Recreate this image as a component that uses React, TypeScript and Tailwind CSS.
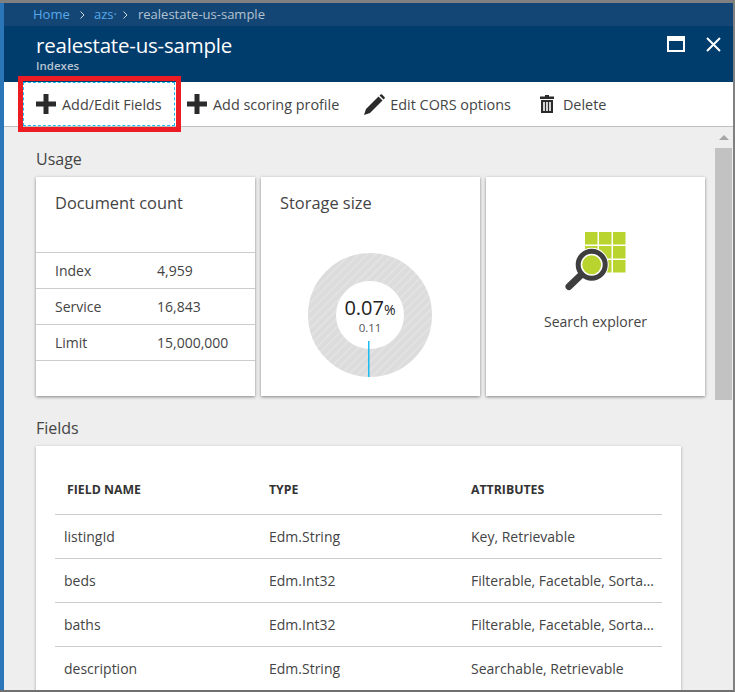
const font = { fontFamily: '"Open Sans", "Noto Sans", sans-serif' };

const tools = [
  { label: 'Add/Edit Fields', icon: 'plus', focused: true },
  { label: 'Add scoring profile', icon: 'plus' },
  { label: 'Edit CORS options', icon: 'pencil' },
  { label: 'Delete', icon: 'trash' },
];

const counts = [
  ['Index', '4,959'],
  ['Service', '16,843'],
  ['Limit', '15,000,000'],
];

const fields = [
  ['listingId', 'Edm.String', 'Key, Retrievable'],
  ['beds', 'Edm.Int32', 'Filterable, Facetable, Sortable'],
  ['baths', 'Edm.Int32', 'Filterable, Facetable, Sortable'],
  ['description', 'Edm.String', 'Searchable, Retrievable'],
];

function ToolIcon({ name }: { name: string }) {
  if (name === 'plus') {
    return (
      <svg width="20" height="20" viewBox="0 0 20 20" fill="#2b2b2b">
        <path d="M7.500 0h5v7.500h7.500v5h-7.500v7.500h-5v-7.500H0v-5h7.500z" />
      </svg>
    );
  }
  if (name === 'pencil') {
    return (
      <svg width="21" height="21" viewBox="0 0 21 21" fill="#2b2b2b">
        <path d="M0 21l2-6L14.500 2.500l4 4L6 19z" />
        <path d="M15.500 1.500l1-1q.8-.6 1.500 0l2.500 2.500q.6.700 0 1.500l-1 1z" />
      </svg>
    );
  }
  return (
    <svg width="14" height="18" viewBox="0 0 14 18" fill="#2b2b2b">
      <path d="M5 0h4v1.500h5V4H0V1.500h5z" />
      <path d="M1 5h12v13H1zM3.200 7v9h1.600V7zm3 0v9h1.600V7zm3 0v9h1.600V7z" fillRule="evenodd" />
    </svg>
  );
}

function Chevron() {
  return (
    <svg width="5" height="8" viewBox="0 0 5 8" fill="none" stroke="#d0d8e0" strokeWidth="1" className="shrink-0">
      <path d="M.5.500L4 4 .5 7.500" />
    </svg>
  );
}

function Donut() {
  return (
    <svg width="124" height="124" viewBox="0 0 124 124" className="block">
      <defs>
        <pattern id="hatch" width="6" height="6" patternUnits="userSpaceOnUse" patternTransform="rotate(45)">
          <rect width="6" height="6" fill="#dcdcdc" />
          <rect width="1.500" height="6" fill="#e4e4e4" />
        </pattern>
      </defs>
      <circle cx="62" cy="62" r="48" fill="none" stroke="url(#hatch)" strokeWidth="28" />
      <rect x="60" y="88" width="1.500" height="36" fill="#1bbcf2" />
    </svg>
  );
}

function ExplorerIcon() {
  return (
    <svg width="62" height="62" viewBox="0 0 62 62" className="block">
      <g fill="#bad42f">
        <rect x="20" y="0" width="12.500" height="12.500" />
        <rect x="34" y="0" width="12.500" height="12.500" />
        <rect x="48" y="0" width="12.500" height="12.500" />
        <rect x="20" y="14" width="12.500" height="12.500" />
        <rect x="34" y="14" width="12.500" height="12.500" />
        <rect x="48" y="14" width="12.500" height="12.500" />
        <rect x="20" y="28" width="12.500" height="12.500" />
        <rect x="34" y="28" width="12.500" height="12.500" />
        <rect x="48" y="28" width="12.500" height="12.500" />
      </g>
      <circle cx="26.700" cy="32.700" r="17" fill="#fff" />
      <path d="M15 44L4 54.500" stroke="#3e3e3e" strokeWidth="7" strokeLinecap="round" />
      <circle cx="26.700" cy="32.700" r="13.500" fill="#fff" stroke="#3e3e3e" strokeWidth="5" />
      <circle cx="26.700" cy="32.700" r="9.500" fill="#bad42f" />
    </svg>
  );
}

export default function App() {
  return (
    <div
      className="relative w-[735px] h-[692px] overflow-hidden flex flex-col bg-[#eeeeee] border-t-[3px] border-b-[2px] border-r-[2px] border-t-[#808080] border-b-[#707070] border-r-[#808080]"
      style={font}
    >
      <div className="flex-1 min-h-0 flex flex-col border-l-[4px] border-l-[#2a76b8]">
        {/* Breadcrumb */}
        <div className="h-[23px] shrink-0 bg-[#134674] flex items-center pl-[29px] text-[13px] text-[#b4c2d0]">
          <span className="w-[47px] text-[#59a9ea]">Home</span>
          <Chevron />
          <span className="w-[38px] pl-[9px] text-[#59a9ea]">azs·</span>
          <Chevron />
          <span className="pl-[10px]">realestate-us-sample</span>
        </div>

        {/* Title */}
        <div className="h-[56px] shrink-0 bg-[#003c6c] flex items-start justify-between pl-[32px] pr-[12px] text-white">
          <div>
            <div className="text-[20.500px] leading-[28px] mt-[5px] tracking-[-0.2px]">realestate-us-sample</div>
            <div className="text-[11.500px] leading-[13px] font-semibold text-[#b8c4d0]">Indexes</div>
          </div>
          <div className="flex items-center gap-[21px] mt-[10px]">
            <div className="w-[18px] h-[16px] border-[2px] border-t-[5px] border-white" />
            <svg width="15" height="15" viewBox="0 0 15 15" stroke="#fff" strokeWidth="2" fill="none">
              <path d="M1 1l13 13M14 1L1 14" />
            </svg>
          </div>
        </div>

        {/* Toolbar */}
        <div className="h-[45px] shrink-0 bg-white border-b border-b-[#c0c0c0] flex items-stretch pl-[19px] text-[14.400px] text-[#444444]">
          {tools.map((t) => (
            <div
              key={t.label}
              className={
                t.focused
                  ? 'w-[152px] flex items-center gap-[6px] pl-[12px] border border-dashed border-[#1bbcf2]'
                  : t.icon === 'trash'
                    ? 'flex items-center gap-[9px] ml-[29px]'
                    : t.icon === 'pencil'
                      ? 'flex items-center gap-[5px] ml-[25px]'
                      : 'flex items-center gap-[6px] ml-[12px]'
              }
            >
              <ToolIcon name={t.icon} />
              <span className="pt-[2px]">{t.label}</span>
            </div>
          ))}
        </div>

        {/* Content */}
        <div className="flex-1 min-h-0 flex overflow-hidden">
          <div className="w-[710px] shrink-0 pl-[32px]">
            <div className="text-[16px] leading-[22px] text-[#444444] mt-[21px]">Usage</div>
            <div className="flex gap-[6px] mt-[7px]">
              <div className="w-[219px] h-[219px] bg-white shadow-[0_1px_3px_rgba(0,0,0,0.45)]">
                <div className="text-[16.400px] leading-[22px] text-[#444444] pl-[19px] pt-[15px] h-[75px]">Document count</div>
                <div className="border-t border-t-[#cccccc]">
                  {counts.map(([label, value]) => (
                    <div key={label} className="h-[36px] flex items-center pl-[19px] border-b border-b-[#cccccc] text-[14px] text-[#444444]">
                      <span className="w-[102px]">{label}</span>
                      <span>{value}</span>
                    </div>
                  ))}
                </div>
              </div>

              <div className="w-[219px] h-[219px] bg-white shadow-[0_1px_3px_rgba(0,0,0,0.45)]">
                <div className="text-[16.400px] leading-[22px] text-[#444444] pl-[19px] pt-[15px]">Storage size</div>
                <div className="relative w-[124px] mt-[39px] ml-[47px]">
                  <Donut />
                  <div className="absolute left-0 right-0 top-[43px] text-center text-[#222222]">
                    <div className="text-[20px] leading-[23px]">
                      0.07<span className="text-[14px]">%</span>
                    </div>
                    <div className="text-[11.500px] leading-[13px] text-[#555555]">0.11</div>
                  </div>
                </div>
              </div>

              <div className="w-[219px] h-[219px] bg-white shadow-[0_1px_3px_rgba(0,0,0,0.45)] flex flex-col items-center">
                <div className="mt-[55px]">
                  <ExplorerIcon />
                </div>
                <div className="text-[14px] leading-[20px] text-[#444444] mt-[18px]">Search explorer</div>
              </div>
            </div>

            <div className="text-[16px] leading-[22px] text-[#444444] mt-[21px]">Fields</div>
            <div className="w-[645px] h-[300px] mt-[7px] bg-white shadow-[0_1px_3px_rgba(0,0,0,0.3)] px-[19px] pt-[25px] text-[14px] text-[#444444]">
              <div className="h-[44px] flex items-center border-b border-b-[#cccccc] pb-[4px] text-[12.300px] font-bold text-[#333333]">
                <span className="w-[214px] pl-[12px] shrink-0">FIELD NAME</span>
                <span className="w-[202px] shrink-0">TYPE</span>
                <span>ATTRIBUTES</span>
              </div>
              {fields.map(([name, type, attrs]) => (
                <div key={name} className="h-[44px] flex items-center border-b border-b-[#cccccc]">
                  <span className="w-[214px] pl-[9px] shrink-0">{name}</span>
                  <span className="w-[202px] shrink-0">{type}</span>
                  <span className="w-[191px] truncate">{attrs}</span>
                </div>
              ))}
            </div>
          </div>

          {/* Scrollbar */}
          <div className="w-[19px] flex flex-col items-center pt-[8px]">
            <div className="w-0 h-0 border-l-[5px] border-r-[5px] border-b-[5px] border-l-transparent border-r-transparent border-b-[#a6a6a6]" />
            <div className="w-[17px] h-[252px] mt-[8px] bg-[#c2c2c2]" />
          </div>
        </div>
      </div>

      {/* Red callout */}
      <div className="absolute left-[18px] top-[73px] w-[163px] h-[56px] border-[5px] border-[#ed1c24]" />
    </div>
  );
}
